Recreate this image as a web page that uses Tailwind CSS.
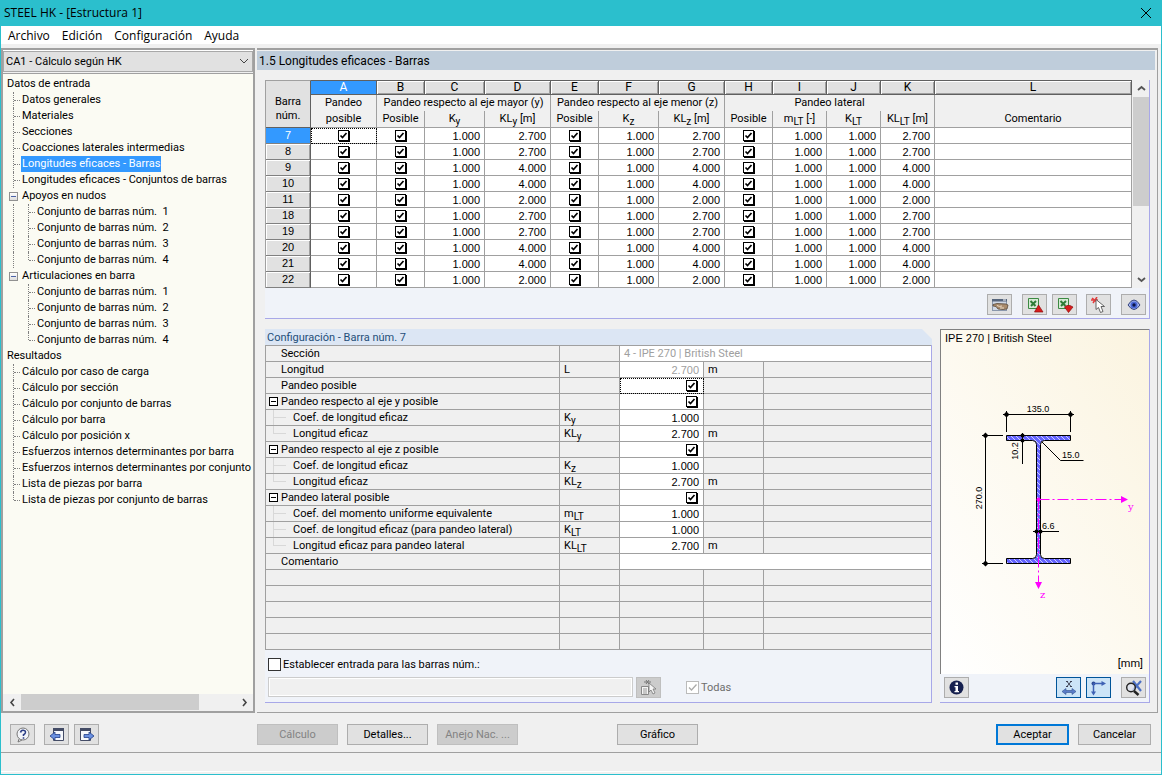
<!DOCTYPE html>
<html lang="es">
<head>
<meta charset="utf-8">
<title>STEEL HK - [Estructura 1]</title>
<script src="https://cdn.jsdelivr.net/npm/@tailwindcss/browser@4"></script>
</head>
<body class="bg-[#f0f0f0] text-black">
<div class="flex min-h-screen flex-col border-x border-b border-[#2bbfcd] font-[Roboto,'Noto_Sans',sans-serif] text-[11px] leading-4">

  <header class="flex h-[26px] items-center justify-between bg-[#2bbfcd] pr-[9px] pl-[3px] font-['Open_Sans','Noto_Sans',sans-serif]">
    <h1 class="text-xs">STEEL HK - [Estructura 1]</h1>
    <button aria-label="Cerrar"><svg width="12" height="12" viewBox="0 0 12 12" stroke="#000" fill="none"><path d="M1 1 11 11M11 1 1 11"/></svg></button>
  </header>

  <nav class="flex h-[18px] items-end gap-3 bg-white pl-[7px] font-['Open_Sans','Noto_Sans',sans-serif] text-xs">
    <button>Archivo</button><button>Edición</button><button>Configuración</button><button>Ayuda</button>
  </nav>

  <div class="mt-1 flex flex-1">
    <!-- navigation -->
    <aside class="mr-0.5 flex w-[254px] shrink-0 flex-col border-2 border-[#a0a0a0] bg-[#fbfbf3]">
      <div class="relative h-[23px] border-b border-[#f0f0f0] bg-white pt-px">
        <select aria-label="Caso" class="h-[21px] w-full appearance-none border border-[#a8a8a8] bg-[#e1e1e1] pt-px pl-0.5"><option>CA1 - Cálculo según HK</option></select>
        <svg class="pointer-events-none absolute top-2 right-1" width="10" height="7" viewBox="0 0 10 7" fill="none" stroke="#444"><path d="M1 1 5 5 9 1"/></svg>
      </div>
      <div id="tree" class="flex-1 border-t border-[#a0a0a0] pt-0.5 whitespace-nowrap"></div>
      <div class="flex h-[17px] items-center bg-[#f0f0f0]">
        <button aria-label="Izquierda" class="grid w-[18px] place-items-center"><svg width="7" height="9" viewBox="0 0 7 9" fill="none" stroke="#444" stroke-width="1.6"><path d="M5 1 2 4.500 5 8"/></svg></button>
        <div class="flex h-full flex-1"><div class="h-4 w-[178px] bg-[#cdcdcd]"></div></div>
        <button aria-label="Derecha" class="grid w-[18px] place-items-center"><svg width="7" height="9" viewBox="0 0 7 9" fill="none" stroke="#444" stroke-width="1.6"><path d="M2 1 5 4.500 2 8"/></svg></button>
      </div>
    </aside>

    <!-- work area -->
    <main class="mr-[3px] flex min-w-0 flex-1 flex-col border-t-2 border-r border-b border-[#a0a0a0] pt-px">
      <h2 class="mr-0.5 h-[19px] bg-[#bfcddb] pl-0.5 text-xs leading-5">1.5 Longitudes eficaces - Barras</h2>

      <section class="mt-2.5 mr-[7px] ml-2 border-r border-b border-[#a8a8e8] bg-[#f0f3f9]">
        <div class="flex bg-[#f0f0f0]">
          <table class="w-full table-fixed border-separate border-spacing-0 border-l border-[#a0a0a0] text-[11px] leading-[15px]">
            <colgroup><col class="w-[45px]"><col class="w-[66px]"><col class="w-12"><col class="w-[60px]"><col class="w-[66px]"><col class="w-12"><col class="w-[60px]"><col class="w-[66px]"><col class="w-12"><col class="w-[54px]"><col class="w-[54px]"><col class="w-[54px]"><col></colgroup>
            <thead id="head"></thead>
            <tbody id="rows" class="font-['Liberation_Sans',Arial,sans-serif]"></tbody>
          </table>
          <div class="flex w-[17px] shrink-0 flex-col items-end bg-[#f0f0f0]">
            <button aria-label="Subir" class="grid h-[17px] w-4 place-items-center"><svg width="9" height="7" viewBox="0 0 9 7" fill="none" stroke="#555" stroke-width="1.800"><path d="M1 5 4.500 2 8 5"/></svg></button>
            <div class="w-4 flex-1"><div class="h-[109px] bg-[#cdcdcd]"></div></div>
            <button aria-label="Bajar" class="grid h-[17px] w-4 place-items-center"><svg width="9" height="7" viewBox="0 0 9 7" fill="none" stroke="#555" stroke-width="1.800"><path d="M1 2 4.500 5 8 2"/></svg></button>
          </div>
        </div>
        <div class="flex h-[30px] items-end justify-end pr-[3px] pb-[3px]">
          <button aria-label="Opciones" class="grid h-[21px] w-[25px] place-items-center border border-[#adadad] bg-[#e1e1e1]"><svg width="18" height="16" viewBox="0 0 18 16"><rect x="1.500" y="2.500" width="14" height="11" fill="#cfd8e6" stroke="#8a97ab"/><path d="M1 2h15v2.500H1z" fill="#56657c"/><path d="M12 2.500h3v1h-3z" fill="#fff"/><path d="M2 7.500l4-1 9 .5 2 1-1 4-4 .5-5-.5-2-2.500-3-.5z" fill="#a98b6c" stroke="#5a4a3a" stroke-width=".8"/><path d="M6 8.500q2 1.500 5 .5M9 11h4" fill="none" stroke="#ecdcc8"/></svg></button>
          <button aria-label="Exportar a Excel" class="ml-2.5 grid h-[21px] w-[25px] place-items-center border border-[#adadad] bg-[#e1e1e1]"><svg width="18" height="16" viewBox="0 0 18 16"><path d="M2.500 1.500h10v10h-10z" fill="#d7ead6" stroke="#3c8a42"/><path d="M4.500 4l5 5M10 4l-5 5" stroke="#2d7d36" stroke-width="2"/><path d="M12.500 8 17 15H8.500z" fill="#d81c1c" stroke="#8c0f0f" stroke-width=".7"/></svg></button>
          <button aria-label="Importar de Excel" class="ml-[5px] grid h-[21px] w-[25px] place-items-center border border-[#adadad] bg-[#e1e1e1]"><svg width="18" height="16" viewBox="0 0 18 16"><path d="M2.500 1.500h10v10h-10z" fill="#d7ead6" stroke="#3c8a42"/><path d="M4.500 4l5 5M10 4l-5 5" stroke="#2d7d36" stroke-width="2"/><path d="M12.500 15.500 8.500 10 11 8.500h3L17 10z" fill="#d81c1c" stroke="#8c0f0f" stroke-width=".7"/></svg></button>
          <button aria-label="Seleccionar en gráfico" class="ml-[9px] grid h-[21px] w-[25px] place-items-center border border-[#adadad] bg-[#e1e1e1]"><svg width="17" height="16" viewBox="0 0 17 16"><path d="M2 1l5 4M7 0 3 6M1 3h7" stroke="#e43b3b" stroke-width="1.500"/><path d="M6 2.500v10l2.500-2 2 5 2.500-1-2-5h3.500z" fill="#fff" stroke="#555" stroke-width=".9"/></svg></button>
          <button aria-label="Vista" class="ml-2.5 grid h-[21px] w-[25px] place-items-center border border-[#adadad] bg-[#e1e1e1]"><svg width="14" height="12" viewBox="0 0 14 12"><path d="M1 6Q7-4 13 6Q7 15 1 6Z" fill="#a9b9ea" stroke="#33427f"/><circle cx="7" cy="6" r="3.500" fill="#4a68d8"/><circle cx="7" cy="6" r="1.700" fill="#0c1548"/></svg></button>
        </div>
      </section>

      <div class="mt-[10px] mr-[7px] mb-[9px] ml-2 flex flex-1 gap-2">
        <!-- details of the selected member -->
        <section class="flex min-w-0 flex-1 flex-col">
          <h3 class="h-4 bg-[#dce6f4] pl-0.5 leading-[17px] text-[#1f4e79] [clip-path:polygon(0_0,calc(100%-10px)_0,100%_10px,100%_100%,0_100%)]">Configuración - Barra núm. 7</h3>
          <div class="flex flex-1 flex-col border-r border-b border-[#a8a8e8] bg-[#f0f3f9]">
            <table class="w-full table-fixed border-separate border-spacing-0 border-t border-l border-[#a0a0a0] bg-[#f0f0f0] text-[11px] leading-[15px]">
              <colgroup><col class="w-[294px]"><col class="w-[60px]"><col class="w-[84px]"><col class="w-[60px]"><col></colgroup>
              <tbody id="props"></tbody>
            </table>
            <div class="pt-2 pb-1 pl-[3px]">
              <label class="flex h-[13px] items-center gap-0.5"><input type="checkbox" class="size-[13px] appearance-none border border-[#333] bg-white">Establecer entrada para las barras núm.:</label>
              <div class="mt-1.5 flex items-start">
                <input type="text" aria-label="Barras" disabled class="h-5 w-[365px] border border-[#ccc] bg-[#f0f0f0] outline-1 -outline-offset-2 outline-white">
                <button aria-label="Elegir barras" disabled class="ml-[3px] grid h-[21px] w-[25px] place-items-center border border-[#bfbfbf] bg-[#ccc]"><svg width="17" height="16" viewBox="0 0 17 16"><path d="M1.500 6.500h7v8h-7z" fill="#f4f4f4" stroke="#888"/><path d="M3 9h4M3 11h4M3 13h4" stroke="#999"/><path d="M4 2h7M6 0l3 4M9 0 6 4" stroke="#777"/><path d="M9 3v9l2-2 2 4 2-1-2-4h3z" fill="#f4f4f4" stroke="#777" stroke-width=".8"/></svg></button>
                <label class="ml-[25px] flex h-[21px] items-center gap-0.5 text-[#6d6d6d]">
                  <span class="grid"><input type="checkbox" checked disabled class="col-start-1 row-start-1 size-[13px] appearance-none border border-[#bbb] bg-white"><svg class="pointer-events-none col-start-1 row-start-1" width="13" height="13" viewBox="0 0 13 13" fill="none" stroke="#aaa" stroke-width="1.300"><path d="M3 6.500 5.500 9 10.500 3.500"/></svg></span>Todas</label>
              </div>
            </div>
          </div>
        </section>

        <!-- cross-section -->
        <section class="flex w-[210px] shrink-0 flex-col border-r border-b border-[#a8a8e8] bg-[#f0f3f9]">
          <div class="flex flex-1 flex-col border-t border-l border-[#808080] bg-linear-to-tr from-white to-[#fbf4e0] font-['Liberation_Sans',Arial,sans-serif]">
            <h3 class="pl-1">IPE 270 | British Steel</h3>
            <svg class="mt-[49px] ml-[19px]" width="185" height="215" viewBox="960 395 185 215" fill="none" stroke="#000" font-family="Liberation Sans, Arial, sans-serif" font-size="9">
              <defs><pattern id="hatch" width="5" height="5" patternUnits="userSpaceOnUse"><rect width="5" height="5" fill="#6464ff" stroke="none"/><path d="M-1-1 6 6M-1 4l2 2M4-1l2 2" stroke="#d8d8ff" stroke-width=".9"/></pattern></defs>
              <path fill="url(#hatch)" d="M1006.500 435.500h64v5h-26q-4 0-4 4v110q0 4 4 4h26v5h-64v-5h26q4 0 4-4v-110q0-4-4-4h-26z"/>
              <path d="M1003 414.500h71M1006.500 411v21M1070.500 411v21M985.500 433v133M982 435.500h21M982 563.500h21M1022.500 433v31M1042 442l18.500 18.500h23M1033 531.500h26"/>
              <g fill="#000" stroke="none"><path d="M1006.500 411.500l3 3-3 3-3-3zM1070.500 411.500l3 3-3 3-3-3zM985.500 432.500l3 3-3 3-3-3zM985.500 560.500l3 3-3 3-3-3z"/><circle cx="1022.500" cy="435.500" r="2"/><circle cx="1022.500" cy="440.500" r="2"/><circle cx="1036.500" cy="531.500" r="2"/><circle cx="1040.500" cy="531.500" r="2"/>
                <text x="1038" y="412" text-anchor="middle">135.0</text><text x="1062" y="458">15.0</text><text x="1042" y="529">6.6</text>
                <text transform="translate(982 498) rotate(-90)" text-anchor="middle">270.0</text><text transform="translate(1018 451) rotate(-90)" text-anchor="middle">10.2</text></g>
              <path stroke="#f0f" stroke-dasharray="11 3 2 3" d="M1038.500 499.500h83M1038.500 499.500v83"/>
              <g fill="#f0f" stroke="none" font-family="DejaVu Serif, serif" font-size="10"><path d="M1121 496l7 3.500-7 3.500zM1035 582h7l-3.500 7z"/><circle cx="1038.500" cy="499.500" r="2"/><text x="1128" y="510">y</text><text x="1040" y="598">z</text></g>
            </svg>
            <p class="mt-auto pr-1.5 pb-0.5 text-right font-[Roboto,'Noto_Sans',sans-serif]">[mm]</p>
          </div>
          <div class="flex h-7 items-start pt-[3px] pr-[3px] pl-1">
            <button aria-label="Información" class="mr-auto grid h-[21px] w-[25px] place-items-center border border-[#adadad] bg-[#e1e1e1]"><svg width="15" height="15" viewBox="0 0 15 15"><circle cx="7.500" cy="7.500" r="7" fill="#16204f"/><path d="M6.500 2.500h2.500v2.200H6.500zM5.500 6H9v5h1v1.300H5.500V11h1V7.200h-1z" fill="#fff"/></svg></button>
            <button aria-label="Acotaciones" class="grid h-[21px] w-[25px] place-items-center border border-[#005499] bg-[#cce4f7]"><svg width="16" height="15" viewBox="0 0 16 15"><path d="M6 1.500 10 6.500M10 1.500 6 6.500M5 1.500h2M9 1.500h2M5 6.500h2M9 6.500h2" stroke="#223" stroke-width=".8"/><path d="M1 11.500 5 8.500v2h6v-2l4 3-4 3v-2H5v2z" fill="#5a7cc8" stroke="#31508f" stroke-width=".6"/></svg></button>
            <button aria-label="Ejes" class="ml-[5px] grid h-[21px] w-[25px] place-items-center border border-[#005499] bg-[#cce4f7]"><svg width="17" height="16" viewBox="0 0 17 16"><circle cx="3.500" cy="3.500" r="2" fill="#2c4a94"/><path d="M3.500 3.500H12M3.500 3.500V12" stroke="#3f62b5" stroke-width="1.500"/><path d="M11.500 1 16 3.500 11.500 6zM1 11.500h5l-2.500 4z" fill="#3f62b5"/></svg></button>
            <button aria-label="Vista completa" class="ml-2.5 grid h-[21px] w-[25px] place-items-center border border-[#adadad] bg-[#e1e1e1]"><svg width="17" height="16" viewBox="0 0 17 16"><path d="M8 1l8 10M16 1 8 10" stroke="#4a6fc4" stroke-width="2.200"/><circle cx="6" cy="7.500" r="4.300" fill="#dfe6f2" fill-opacity=".7" stroke="#222" stroke-width="1.400"/><path d="M9 11l4.500 4" stroke="#222" stroke-width="2.400"/></svg></button>
          </div>
        </section>
      </div>
    </main>
  </div>

  <footer class="mt-0.5">
    <div class="flex h-[38px] items-start border-b border-[#a0a0a0] pt-[9px] pr-2.5 pl-[9px]">
      <button aria-label="Ayuda" class="grid h-[21px] w-[25px] place-items-center border border-[#adadad] bg-[#e1e1e1]"><svg width="16" height="16" viewBox="0 0 16 16"><path d="M4 12l-1 3 4-2" fill="#f2f4f8" stroke="#777"/><circle cx="8" cy="7" r="6" fill="#f2f4f8" stroke="#777"/><path d="M5.500 5.500Q6 3 8.200 3.200 11 3.500 10.300 6 9.800 7 8.500 7.800V9M8.500 10.200v1.500" fill="none" stroke="#2d3f86" stroke-width="1.600"/></svg></button>
      <button aria-label="Anterior" class="ml-[9px] grid h-[21px] w-[25px] place-items-center border border-[#adadad] bg-[#e1e1e1]"><svg width="16" height="16" viewBox="0 0 16 16"><path d="M4.500 1.500h10v12h-10z" fill="#f6f8fc" stroke="#444c66"/><path d="M4 1h11v3H4z" fill="#444c66"/><path d="M1 9 6 5v2.500h5v3H6V13z" fill="#6a90e0" stroke="#213d88" stroke-width=".8"/></svg></button>
      <button aria-label="Siguiente" class="ml-[5px] grid h-[21px] w-[25px] place-items-center border border-[#adadad] bg-[#e1e1e1]"><svg width="16" height="16" viewBox="0 0 16 16"><path d="M1.500 1.500h10v12h-10z" fill="#f6f8fc" stroke="#444c66"/><path d="M1 1h11v3H1z" fill="#444c66"/><path d="M15 9 10 5v2.500H5v3h5V13z" fill="#6a90e0" stroke="#213d88" stroke-width=".8"/></svg></button>
      <button disabled class="ml-[158px] h-[21px] w-[81px] border border-[#bfbfbf] bg-[#ccc] pt-px text-[#838383]">Cálculo</button>
      <button class="ml-[9px] h-[21px] w-[81px] border border-[#adadad] bg-[#e1e1e1] pt-px">Detalles...</button>
      <button disabled class="ml-[9px] h-[21px] w-[81px] border border-[#bfbfbf] bg-[#ccc] pt-px text-[#838383]">Anejo Nac. ...</button>
      <button class="ml-[99px] h-[21px] w-[81px] border border-[#adadad] bg-[#e1e1e1] pt-px">Gráfico</button>
      <button class="ml-auto h-[21px] w-[73px] border-2 border-[#0078d7] bg-[#e1e1e1] pt-px">Aceptar</button>
      <button class="ml-[9px] h-[21px] w-[73px] border border-[#adadad] bg-[#e1e1e1] pt-px">Cancelar</button>
    </div>
    <div class="h-[19px] border-b border-white"></div>
    <div class="h-0.5"></div>
  </footer>
</div>

<script>
const tick = (label) => `<span class="inline-grid align-middle"><input type="checkbox" checked aria-label="${label}" class="col-start-1 row-start-1 size-[11px] appearance-none border border-black bg-white shadow-[1px_1px_0_#000]"><svg class="pointer-events-none col-start-1 row-start-1" width="11" height="11" viewBox="0 0 11 11" fill="none" stroke="#000" stroke-width="1.700"><path d="M2.500 5.500 4.500 7.500 8.500 3"/></svg></span>`;

// navigation tree
const V = '<span class="h-4 w-0 shrink-0 border-l border-dotted border-[#808080]"></span>';
const VL = '<span class="h-2 w-0 shrink-0 self-start border-l border-dotted border-[#808080]"></span>';
const H = '<span class="mr-px h-0 w-1.5 shrink-0 border-t border-dotted border-[#808080]"></span>';
const one = (t, last) => `<li class="flex h-4 items-center pl-2.5">${last ? VL : V}${H}<a href="#" class="shrink-0 ${t === 'Longitudes eficaces - Barras' ? 'bg-[#3399ff] pr-px pl-px text-white' : 'pl-px'}">${t}</a></li>`;
const sub = (n, more) => `<li class="flex h-4 items-center pl-2.5">${more ? V : '<span class="w-px"></span>'}<span class="w-3.5"></span>${n === 4 ? VL : V}${H}<a href="#" class="pl-px">Conjunto de barras núm.&nbsp; ${n}</a></li>`;
const group = (t, more) => `<li><div class="flex h-4 items-center pl-1.5"><button aria-label="Contraer ${t}" class="mr-1 size-[9px] border border-[#919191] bg-linear-to-b from-white to-[#ddd]"><span class="mx-px block h-px bg-[#4b63a7]"></span></button><a href="#">${t}</a></div><ul>${[1,2,3,4].map(n => sub(n, more)).join('')}</ul></li>`;
document.getElementById('tree').innerHTML = `<ul class="w-[249px] overflow-hidden">
<li><span class="pl-1">Datos de entrada</span><ul>${['Datos generales','Materiales','Secciones','Coacciones laterales intermedias','Longitudes eficaces - Barras','Longitudes eficaces - Conjuntos de barras'].map(t => one(t)).join('')}${group('Apoyos en nudos', true)}${group('Articulaciones en barra', false)}</ul></li>
<li><span class="pl-1">Resultados</span><ul>${['Cálculo por caso de carga','Cálculo por sección','Cálculo por conjunto de barras','Cálculo por barra','Cálculo por posición x','Esfuerzos internos determinantes por barra','Esfuerzos internos determinantes por conjunto','Lista de piezas por barra','Lista de piezas por conjunto de barras'].map((t, i) => one(t, i === 8)).join('')}</ul></li></ul>`;

// member table
const s = (x) => `<sub class="text-[10px]">${x}</sub>`;
const hc = 'h-[15px] border-t border-r border-b border-[#606060] p-0 text-xs leading-[13px] font-normal';
document.getElementById('head').innerHTML = `<tr><th rowspan="3" class="border-t border-r border-b border-t-[#a0a0a0] border-r-[#606060] border-b-[#606060] bg-[#e1e1e1] p-0 pt-2.5 leading-[14px] font-normal">Barra<br>núm.</th>${'ABCDEFGHIJKL'.split('').map(c => `<th class="${hc} ${c === 'A' ? 'bg-[#3399ff] text-white' : 'bg-[#e1e1e1] shadow-[inset_1px_1px_0_#fff,inset_-1px_-1px_0_#a0a0a0]'}">${c}</th>`).join('')}</tr>
<tr>${[['Pandeo',1],['Pandeo respecto al eje mayor (y)',3],['Pandeo respecto al eje menor (z)',3],['Pandeo lateral',4],['',1]].map(([t, n]) => `<th colspan="${n}" class="h-4 border-r border-[#a0a0a0] p-0 align-top leading-4 font-normal">${t}</th>`).join('')}</tr>
<tr>${['posible','Posible','K'+s('y'),'KL'+s('y')+' [m]','Posible','K'+s('z'),'KL'+s('z')+' [m]','Posible','m'+s('LT')+' [-]','K'+s('LT'),'KL'+s('LT')+' [m]','Comentario'].map(t => `<th class="h-[17px] border-r border-b border-[#a0a0a0] p-0 align-top leading-4 font-normal">${t}</th>`).join('')}</tr>`;
const data = [[7,'2.700'],[8,'2.700'],[9,'4.000'],[10,'4.000'],[11,'2.000'],[18,'2.700'],[19,'2.700'],[20,'4.000'],[21,'4.000'],[22,'2.000']];
const base = 'h-4 border-r border-b border-[#a0a0a0] bg-white p-0';
document.getElementById('rows').innerHTML = data.map(([n, L], i) => `<tr><th class="h-4 border-r border-b border-r-[#606060] border-b-[#808080] p-0 font-normal ${i ? 'bg-[#e1e1e1] shadow-[inset_1px_1px_0_#fff,inset_-1px_0_0_#a0a0a0]' : 'bg-[#3399ff] text-white'}">${n}</th>${['c','c','1.000',L,'c','1.000',L,'c','1.000','1.000',L,''].map((v, j) => v === 'c'
  ? `<td class="${base} text-center leading-0 ${i + j === 0 ? 'outline-1 -outline-offset-1 outline-black outline-dotted' : ''}">${tick('Barra ' + n)}</td>`
  : `<td class="${base} pt-px pr-1 text-right leading-[14px]">${v}</td>`).join('')}</tr>`).join('');

// properties: [kind, name, symbol, value, unit]
const P = [['','Sección','','wide','4 - IPE 270 | British Steel'],['','Longitud','L','2.700','m'],['','Pandeo posible','','c',''],
['g','Pandeo respecto al eje y posible','','c',''],['k','Coef. de longitud eficaz','K'+s('y'),'1.000',''],['l','Longitud eficaz','KL'+s('y'),'2.700','m'],
['g','Pandeo respecto al eje z posible','','c',''],['k','Coef. de longitud eficaz','K'+s('z'),'1.000',''],['l','Longitud eficaz','KL'+s('z'),'2.700','m'],
['g','Pandeo lateral posible','','c',''],['k','Coef. del momento uniforme equivalente','m'+s('LT'),'1.000',''],['k','Coef. de longitud eficaz (para pandeo lateral)','K'+s('LT'),'1.000',''],['l','Longitud eficaz para pandeo lateral','KL'+s('LT'),'2.700','m'],
['','Comentario','','wide',''],['','','','',''],['','','','',''],['','','','',''],['','','','',''],['','','','','']];
const lead = {
  '': '<span class="w-[15px]"></span>',
  g: '<span class="w-[15px] pl-[3px]"><button aria-label="Contraer" class="block size-[9px] border border-black bg-white"><span class="mx-px block h-px bg-black"></span></button></span>',
  k: '<span class="ml-[7px] h-[15px] w-0 border-l border-[#d8d8d8]"></span><span class="mr-[7px] h-px w-3 bg-[#d8d8d8]"></span>',
  l: '<span class="ml-[7px] h-2 w-0 self-start border-l border-[#d8d8d8]"></span><span class="mr-[7px] h-px w-3 bg-[#d8d8d8]"></span>'
};
const pc = 'h-4 border-r border-b border-[#a0a0a0] p-0';
document.getElementById('props').innerHTML = P.map(([k, t, y, v, u], i) => `<tr><td class="${pc}"><div class="flex h-[15px] items-center">${lead[k]}${t}</div></td><td class="${pc} pl-1">${y}</td>${v === 'wide'
  ? `<td colspan="3" class="h-4 border-b border-[#a0a0a0] bg-white p-0 pl-1 text-[#a0a0a0]">${u}</td>`
  : `<td class="${pc} ${v === 'c' ? '' : 'pt-px'} pr-1 text-right leading-[14px] font-['Liberation_Sans',Arial,sans-serif] ${v ? 'bg-white' : ''} ${i === 1 ? 'text-[#a0a0a0]' : ''} ${i === 2 ? 'outline-1 -outline-offset-1 outline-black outline-dotted' : ''}">${v === 'c' ? `<div class="flex h-[15px] items-center justify-end pr-0.5">${tick(t)}</div>` : v}</td><td class="${pc} pl-1">${u}</td><td class="h-4 border-b border-[#a0a0a0] p-0"></td>`}</tr>`).join('');
</script>
</body>
</html>
